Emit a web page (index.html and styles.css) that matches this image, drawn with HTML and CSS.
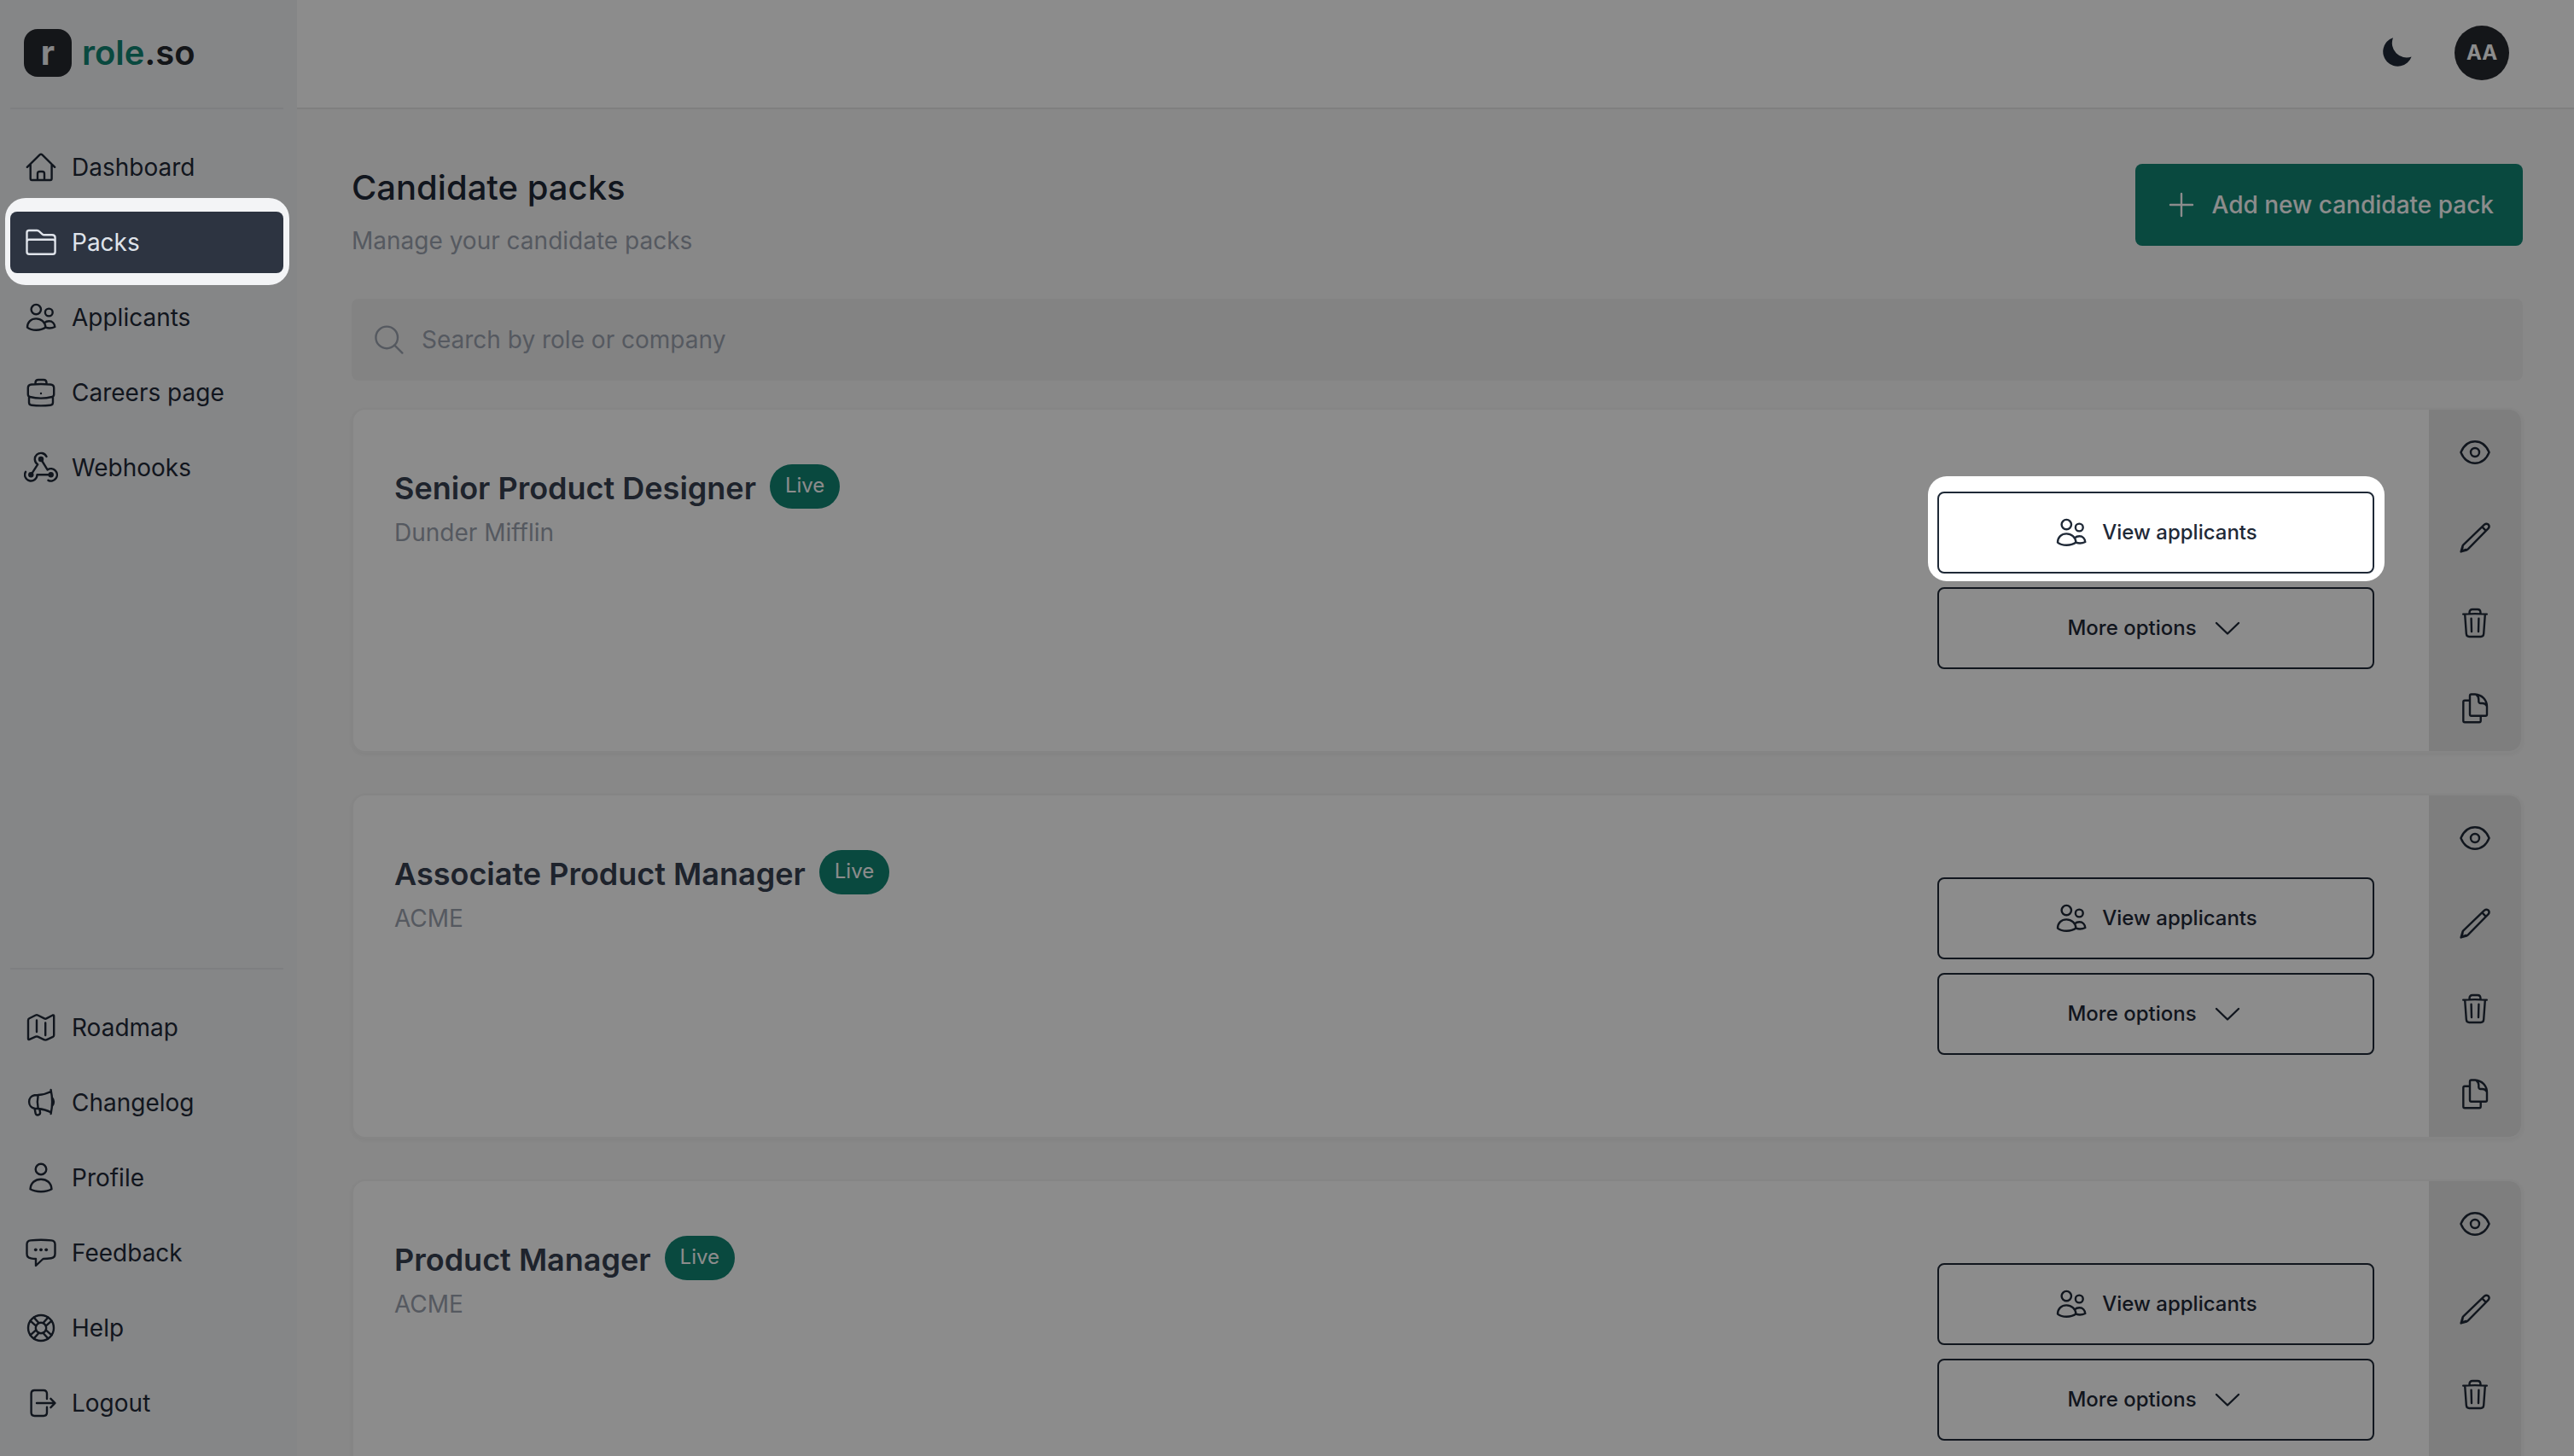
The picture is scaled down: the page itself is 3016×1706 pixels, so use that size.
FILE: index.html
```html
<!DOCTYPE html>
<html lang="en">
<head>
	<meta charset="utf-8">
	<title>Candidate packs - role.so</title>
	<link rel="stylesheet" href="styles.css">
</head>
<body>
<!-- icon sprite -->
<svg class="sprite" aria-hidden="true">
	<symbol id="i-home" viewBox="0 0 40 40">
		<path d="M3.8 19.8L18.5 5.4Q20 4 21.5 5.4L36.2 19.8M7.7 16.5V33.3Q7.7 35 9.4 35H31Q32.6 35 32.6 33.3V16.5M16 35V27.5Q16 25 18.5 25H21.5Q24 25 24 27.5V35"/>
	</symbol>
	<symbol id="i-folder" viewBox="0 0 40 40">
		<path d="M3.5 31V8.5Q3.5 6 6 6H15.5Q17 6 18 7.2L21.5 10.3Q22.5 11.3 24 11.3H33Q36.6 11.5 36.6 14.5V31Q36.6 33.8 34 33.8H6.2Q3.5 33.8 3.5 31ZM3.5 19Q3.8 16.8 6 16.8H34Q36.4 16.8 36.6 19"/>
	</symbol>
	<symbol id="i-users" viewBox="0 0 40 40">
		<circle cx="14.3" cy="10.6" r="5.7"/><circle cx="29.3" cy="14" r="4.4"/>
		<path d="M4 31.6C4 25.5 8.5 21.4 14.3 21.4S25 25.5 25.5 31.6C22 34.1 18 34.8 14.5 34.8S7 34.1 4 31.6ZM24 26.3C25.5 24.9 27.5 24.3 29.5 24.3C33.5 24.3 36 27.3 36.3 31C33.5 32.4 29 33 25.5 31.7"/>
	</symbol>
	<symbol id="i-case" viewBox="0 0 40 40">
		<path d="M9 10.5Q20 9.5 31 10.5Q35.2 10.8 35.2 14.5V22Q35.2 24.5 33 25Q20 28.2 7 25Q4.8 24.5 4.8 22V14.5Q4.8 10.8 9 10.5ZM6 24.5V31.5Q6 34.6 9 34.8Q20 36 31 34.8Q34 34.6 34 31.5V24.5M13.5 10V8.5Q13.5 5 17 5H23Q26.5 5 26.5 8.5V10"/>
		<circle class="dot" cx="20" cy="21" r="1.2"/>
	</symbol>
	<symbol id="i-hook" viewBox="0 0 40 40">
		<path d="M26.5 7A7.2 7.2 0 1 0 16.2 16.2L8.3 28.3M31.7 28.3H15.5A7.2 7.2 0 1 1 2 24.8M20 10L27.6 22.4A7.2 7.2 0 1 1 28.5 34.8"/>
		<circle class="dot" cx="20" cy="10" r="3.2"/><circle class="dot" cx="8.3" cy="28.3" r="3.2"/><circle class="dot" cx="31.7" cy="28.3" r="3.2"/>
	</symbol>
	<symbol id="i-map" viewBox="0 0 40 40">
		<path d="M5 11.5Q5 10 6.3 9.3L13.8 5.5Q15 5 16.2 5.5L24 9.4Q25.2 10 26.4 9.4L33.8 5.5Q35.2 5 35.2 6.5V29Q35.2 30.3 34 30.8L26.4 34.3Q25.2 34.9 24 34.3L16.2 30.7Q15 30.2 13.8 30.7L6.5 33.9Q5 34.4 5 33ZM15 11.5V25M25.2 14.5V29"/>
	</symbol>
	<symbol id="i-horn" viewBox="0 0 40 40">
		<path d="M16.7 11L12.5 11.2A7.6 7.9 0 0 0 12.5 26.8L16.7 27Q15 19 16.7 11ZM16.7 11Q25 10.5 31.6 7M16.7 27Q25 27.7 31.6 31.3M31.6 5Q34.6 19 31.6 33M33.3 14.5Q36.6 19 33.3 23.5M12.6 27L13.6 32.3Q14.4 35 17 34.3Q19.5 33.5 19 31L18.3 27.5"/>
	</symbol>
	<symbol id="i-user" viewBox="0 0 40 40">
		<circle cx="20" cy="10" r="6.3"/>
		<path d="M7.5 33.3C8 26 13 21.7 20 21.7S32 26 32.5 33.3C29 35.5 24.5 36.2 20 36.2S11 35.5 7.5 33.3Z"/>
	</symbol>
	<symbol id="i-chat" viewBox="0 0 40 40">
		<path d="M8 5.4Q20 4.2 32 5.4Q36.5 5.8 36.5 10V21Q36.5 25.6 32 26.2Q27 27 22.5 27L14 35V27Q11 27 8 26.3Q3.5 25.7 3.5 21V10Q3.5 5.8 8 5.4Z"/>
		<circle class="dot" cx="13.8" cy="16.3" r="1.9"/><circle class="dot" cx="20" cy="16.3" r="1.9"/><circle class="dot" cx="26.2" cy="16.3" r="1.9"/>
	</symbol>
	<symbol id="i-help" viewBox="0 0 40 40">
		<circle cx="20" cy="20" r="15"/><circle cx="20" cy="20" r="6.2"/>
		<path d="M7.6 11.6L14.2 17.6M11.6 7.6L17.6 14.2M28.4 7.6L22.4 14.2M32.4 11.6L25.8 17.6M32.4 28.4L25.8 22.4M28.4 32.4L22.4 25.8M11.6 32.4L17.6 25.8M7.6 28.4L14.2 22.4"/>
	</symbol>
	<symbol id="i-logout" viewBox="0 0 40 40">
		<path d="M27 15V9Q27 5 23 5H12.5Q8.6 5 8.6 9V31Q8.6 35 12.5 35H23Q27 35 27 31V24.8M15 20H36M31.4 14.8L36.5 20L31.4 25.2"/>
	</symbol>
	<symbol id="i-eye" viewBox="0 0 40 40">
		<path d="M3.4 20C7 11.5 13 7.3 20 7.3S33 11.5 36.6 20C33 28.5 27 32.7 20 32.7S7 28.5 3.4 20Z"/>
		<circle cx="20" cy="20" r="5"/>
	</symbol>
	<symbol id="i-pencil" viewBox="0 0 40 40">
		<path d="M3.6 36.4L5.4 30Q5.8 29 6.6 28.2L31 4.6Q33.3 2.8 35.6 4.5Q37.6 6.8 35.6 9.2L11.8 33.4Q11 34.2 10 34.6ZM28.4 7.4L32.8 11.8M5.6 30.6L4.4 35.6L9.4 34"/>
	</symbol>
	<symbol id="i-trash" viewBox="0 0 40 40">
		<path d="M6.2 9.6Q20 8.6 33.8 9.6M13.5 9V8Q13.5 4 17 4H23Q26.5 4 26.5 8V9M8.2 10L9.8 32.5Q10.1 36 13.2 36H26.8Q29.9 36 30.2 32.5L31.8 10M15.6 14.8L16 30M24.4 14.8L24 30"/>
	</symbol>
	<symbol id="i-copy" viewBox="0 0 40 40">
		<path d="M15.7 3.5H20C28 4 34 10 34 18V27Q34 28.7 32.3 28.7H15.7Q14 28.7 14 27V5.2Q14 3.5 15.7 3.5ZM21.5 4Q24.5 6 24.3 10V12Q24.5 14 26.5 14H28.5Q32 14 33.6 16.8M14 10.8H8Q6.3 10.8 6.3 12.5V34.5Q6.3 36.2 8 36.2H25Q26.7 36.2 26.7 34.5V29"/>
	</symbol>
	<symbol id="i-down" viewBox="0 0 40 40"><path d="M7 14L20 26.5L33 14"/></symbol>
	<symbol id="i-plus" viewBox="0 0 40 40"><path d="M20 7V33M7 20H33"/></symbol>
	<symbol id="i-search" viewBox="0 0 40 40"><circle cx="17.2" cy="17.4" r="12.8"/><path d="M26.4 26.6L35.4 35.6"/></symbol>
	<symbol id="i-moon" viewBox="0 0 40 40"><path class="dot" d="M16 2.2A17.2 17.2 0 1 0 37.6 24.4A17 17 0 0 1 16 2.2Z"/></symbol>
</svg>

<div class="app">
	<aside class="sidebar">
		<a class="logo" href="#"><span class="logo-mark">r</span><span><b>role</b>.so</span></a>
		<nav class="nav">
			<a class="nav-link" href="#"><svg class="icon"><use href="#i-home"/></svg>Dashboard</a>
			<div class="spot spot-nav">
				<a class="nav-link active" href="#"><svg class="icon"><use href="#i-folder"/></svg>Packs</a>
			</div>
			<a class="nav-link" href="#"><svg class="icon"><use href="#i-users"/></svg>Applicants</a>
			<a class="nav-link" href="#"><svg class="icon"><use href="#i-case"/></svg>Careers page</a>
			<a class="nav-link" href="#"><svg class="icon"><use href="#i-hook"/></svg>Webhooks</a>
		</nav>
		<nav class="nav nav-bottom">
			<a class="nav-link" href="#"><svg class="icon"><use href="#i-map"/></svg>Roadmap</a>
			<a class="nav-link" href="#"><svg class="icon"><use href="#i-horn"/></svg>Changelog</a>
			<a class="nav-link" href="#"><svg class="icon"><use href="#i-user"/></svg>Profile</a>
			<a class="nav-link" href="#"><svg class="icon"><use href="#i-chat"/></svg>Feedback</a>
			<a class="nav-link" href="#"><svg class="icon"><use href="#i-help"/></svg>Help</a>
			<a class="nav-link" href="#"><svg class="icon"><use href="#i-logout"/></svg>Logout</a>
		</nav>
	</aside>

	<div class="page">
		<header class="topbar">
			<button class="icon-btn" aria-label="Dark mode"><svg class="icon"><use href="#i-moon"/></svg></button>
			<button class="avatar">AA</button>
		</header>

		<main class="content">
			<div class="page-head">
				<div>
					<h1>Candidate packs</h1>
					<p class="muted">Manage your candidate packs</p>
				</div>
				<button class="btn-primary"><svg class="icon"><use href="#i-plus"/></svg>Add new candidate pack</button>
			</div>

			<label class="search">
				<svg class="icon"><use href="#i-search"/></svg>
				<input type="text" aria-label="Search packs" placeholder="Search by role or company">
			</label>

			<section class="card">
				<div class="card-info">
					<div class="card-title"><h2>Senior Product Designer</h2><span class="badge">Live</span></div>
					<p class="muted">Dunder Mifflin</p>
				</div>
				<div class="card-buttons">
					<div class="spot spot-btn">
						<button class="btn"><svg class="icon"><use href="#i-users"/></svg>View applicants</button>
					</div>
					<button class="btn">More options<svg class="icon"><use href="#i-down"/></svg></button>
				</div>
				<div class="card-tools">
					<button class="icon-btn" aria-label="View"><svg class="icon"><use href="#i-eye"/></svg></button>
					<button class="icon-btn" aria-label="Edit"><svg class="icon"><use href="#i-pencil"/></svg></button>
					<button class="icon-btn" aria-label="Delete"><svg class="icon"><use href="#i-trash"/></svg></button>
					<button class="icon-btn" aria-label="Duplicate"><svg class="icon"><use href="#i-copy"/></svg></button>
				</div>
			</section>

			<section class="card">
				<div class="card-info">
					<div class="card-title"><h2>Associate Product Manager</h2><span class="badge">Live</span></div>
					<p class="muted">ACME</p>
				</div>
				<div class="card-buttons">
					<button class="btn"><svg class="icon"><use href="#i-users"/></svg>View applicants</button>
					<button class="btn">More options<svg class="icon"><use href="#i-down"/></svg></button>
				</div>
				<div class="card-tools">
					<button class="icon-btn" aria-label="View"><svg class="icon"><use href="#i-eye"/></svg></button>
					<button class="icon-btn" aria-label="Edit"><svg class="icon"><use href="#i-pencil"/></svg></button>
					<button class="icon-btn" aria-label="Delete"><svg class="icon"><use href="#i-trash"/></svg></button>
					<button class="icon-btn" aria-label="Duplicate"><svg class="icon"><use href="#i-copy"/></svg></button>
				</div>
			</section>

			<section class="card">
				<div class="card-info">
					<div class="card-title"><h2>Product Manager</h2><span class="badge">Live</span></div>
					<p class="muted">ACME</p>
				</div>
				<div class="card-buttons">
					<button class="btn"><svg class="icon"><use href="#i-users"/></svg>View applicants</button>
					<button class="btn">More options<svg class="icon"><use href="#i-down"/></svg></button>
				</div>
				<div class="card-tools">
					<button class="icon-btn" aria-label="View"><svg class="icon"><use href="#i-eye"/></svg></button>
					<button class="icon-btn" aria-label="Edit"><svg class="icon"><use href="#i-pencil"/></svg></button>
					<button class="icon-btn" aria-label="Delete"><svg class="icon"><use href="#i-trash"/></svg></button>
					<button class="icon-btn" aria-label="Duplicate"><svg class="icon"><use href="#i-copy"/></svg></button>
				</div>
			</section>
		</main>
	</div>
</div>
<div class="overlay"></div>
</body>
</html>
```
FILE: styles.css
```css
*{
	box-sizing: border-box;
}
body{
	margin: 0;
	font-family: Inter, "Liberation Sans", sans-serif;
	font-size: 28px;
	line-height: 40px;
	color: #1f2937;
	background: #f8f8f8;
}
h1, h2, p{
	margin: 0;
}
a{
	color: inherit;
	text-decoration: none;
}
button{
	font: inherit;
	color: inherit;
	background: none;
	border: 0;
	padding: 0;
	cursor: pointer;
}
.sprite{
	position: absolute;
	width: 0;
	height: 0;
}
.icon{
	display: block;
	flex: none;
	width: 40px;
	height: 40px;
	fill: none;
	stroke: currentColor;
	stroke-width: 2.4;
	stroke-linecap: round;
	stroke-linejoin: round;
}
.dot{
	fill: currentColor;
	stroke: none;
}
.muted{
	color: #9ca3af;
}

.app{
	display: flex;
	height: 100vh;
	overflow: hidden;
}

/* sidebar */
.sidebar{
	display: flex;
	flex-direction: column;
	flex: none;
	width: 348px;
	padding: 0 16px 26px 12px;
	background: #f3f4f6;
}
.logo{
	display: flex;
	align-items: center;
	gap: 12px;
	height: 128px;
	padding: 0 16px 2px;
	border-bottom: 2px solid #e5e7eb;
	font-size: 40px;
	font-weight: 600;
	color: #26282f;
}
.logo b{
	font-weight: 600;
	color: #128574;
}
.logo-mark{
	display: flex;
	align-items: center;
	justify-content: center;
	width: 56px;
	height: 56px;
	border-radius: 16px;
	background: #26282f;
	color: #f3f4f6;
	font-weight: 700;
}
.nav{
	display: flex;
	flex-direction: column;
	gap: 16px;
	padding-top: 32px;
}
.nav-bottom{
	margin-top: auto;
	border-top: 2px solid #e5e7eb;
}
.nav-link{
	display: flex;
	align-items: center;
	gap: 16px;
	height: 72px;
	padding: 0 16px;
	border-radius: 8px;
}
.nav-link.active{
	background: #2d3441;
	color: #dfe3ea;
}

/* top bar */
.page{
	flex: 1;
	min-width: 0;
}
.topbar{
	display: flex;
	align-items: center;
	justify-content: flex-end;
	gap: 48px;
	height: 128px;
	padding: 0 76px 2px;
	background: #fff;
	border-bottom: 2px solid #e7e7e7;
}
.avatar{
	width: 64px;
	height: 64px;
	border-radius: 50%;
	background: #26282f;
	color: #fff;
	font-size: 24px;
	font-weight: 700;
}

/* content */
.content{
	padding: 64px 60px 64px 64px;
}
.page-head{
	display: flex;
	justify-content: space-between;
	align-items: flex-start;
	margin-bottom: 48px;
}
h1{
	margin-bottom: 14px;
	font-size: 40px;
	line-height: 56px;
	font-weight: 500;
}
.btn-primary{
	display: flex;
	align-items: center;
	gap: 16px;
	height: 96px;
	padding: 0 34px;
	border-radius: 8px;
	background: #128574;
	color: #fff;
	font-weight: 500;
}
.search{
	display: flex;
	align-items: center;
	gap: 18px;
	height: 96px;
	padding: 0 24px;
	margin-bottom: 32px;
	border-radius: 8px;
	background: #efefef;
	color: #9ca3af;
}
.search input{
	flex: 1;
	padding: 0;
	border: 0;
	outline: 0;
	background: none;
	font: inherit;
}
.search input::placeholder{
	color: #9ca3af;
}

.card{
	display: flex;
	margin-bottom: 48px;
	border: 2px solid #f3f3f3;
	border-radius: 16px;
	background: #fff;
	box-shadow: 0 2px 6px rgba(0,0,0,.05);
	overflow: hidden;
}
.card-info{
	flex: 1;
	padding: 64px 48px;
}
.card-title{
	display: flex;
	align-items: flex-start;
	gap: 16px;
	margin-bottom: 4px;
}
h2{
	font-size: 36px;
	line-height: 56px;
	font-weight: 600;
	color: #374151;
}
.badge{
	height: 52px;
	padding: 0 18px;
	border-radius: 26px;
	background: #128574;
	color: #fff;
	font-size: 24px;
	line-height: 50px;
}
.card-buttons{
	display: flex;
	flex-direction: column;
	justify-content: center;
	gap: 16px;
	width: 512px;
	margin-right: 64px;
}
.btn{
	display: flex;
	align-items: center;
	justify-content: center;
	gap: 16px;
	width: 100%;
	height: 96px;
	border: 2px solid #1f2937;
	border-radius: 8px;
	font-size: 24px;
	font-weight: 500;
}
.card-tools{
	width: 108px;
	background: #e5e5e5;
}
.card-tools .icon-btn{
	display: flex;
	align-items: center;
	justify-content: center;
	width: 100%;
	height: 100px;
}

/* tour: everything is dimmed except the spotlighted items */
.overlay{
	position: fixed;
	inset: 0;
	z-index: 10;
	background: rgba(0,0,0,.45);
	pointer-events: none;
}
.spot{
	position: relative;
	z-index: 11;
}
.spot-nav{
	margin: -16px -7px -14px -6px;
	padding: 16px 7px 14px 6px;
	border-radius: 24px;
	background: #f3f4f6;
}
.spot-btn{
	margin: -18px -12px -9px -11px;
	padding: 18px 12px 9px 11px;
	border-radius: 22px;
	background: #fff;
}
```
